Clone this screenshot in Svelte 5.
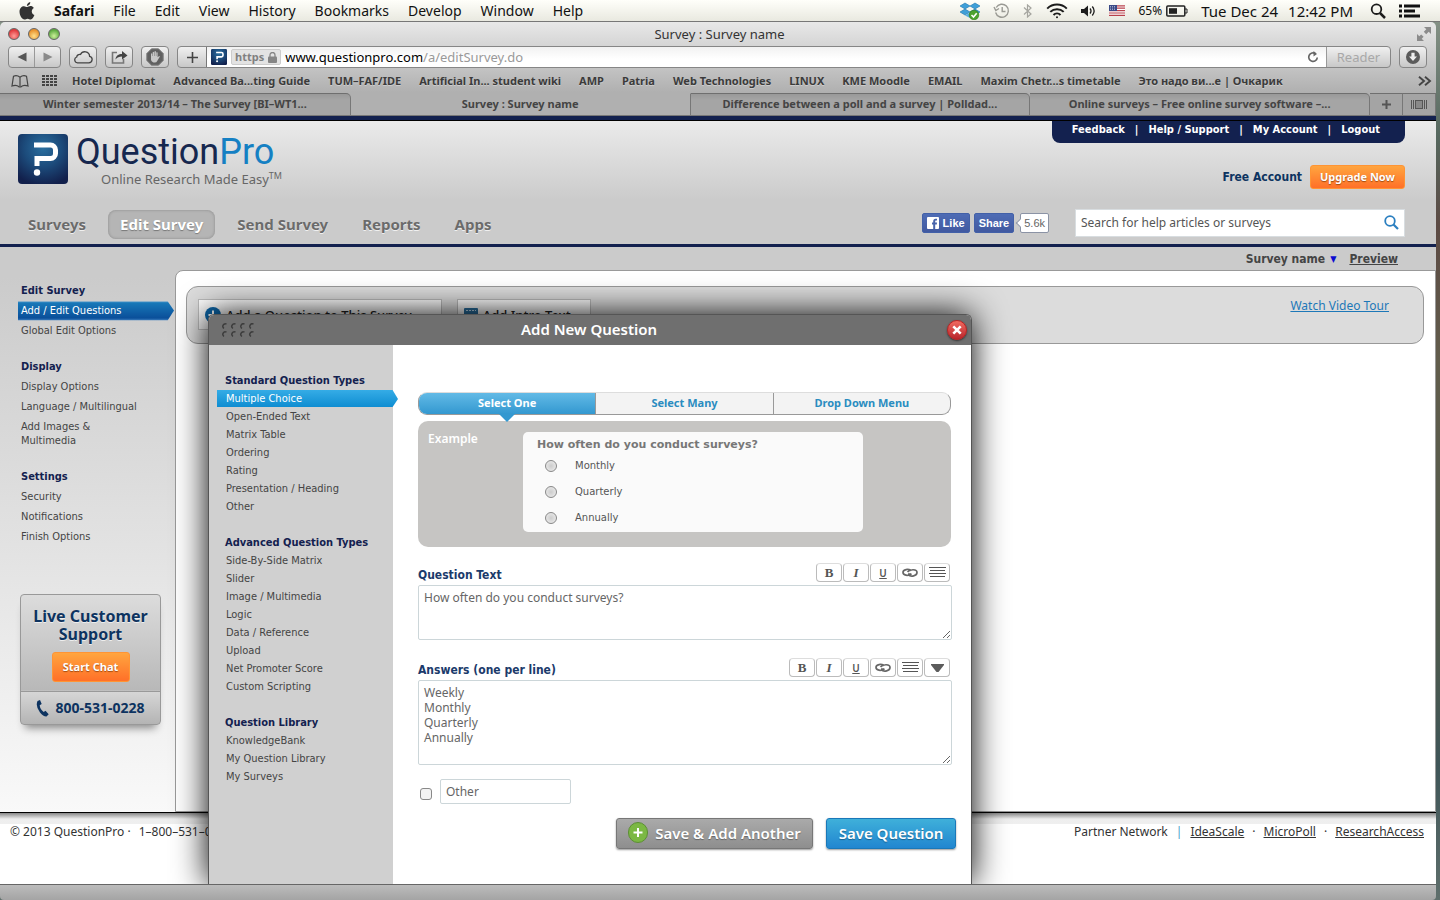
<script>
  const menus = ['File', 'Edit', 'View', 'History', 'Bookmarks', 'Develop', 'Window', 'Help'];
  const bookmarks = [
    'Hotel Diplomat', 'Advanced Ba...ting Guide', 'TUM–FAF/IDE', 'Artificial In... student wiki', 'AMP', 'Patria',
    'Web Technologies', 'LINUX', 'KME Moodle', 'EMAIL', 'Maxim Chetr...s timetable', 'Это надо ви...е | Очкарик'
  ];
  const tabs = [
    'Winter semester 2013/14 – The Survey [BI–WT1...',
    'Survey : Survey name',
    'Difference between a poll and a survey | Polldad...',
    'Online surveys – Free online survey software –...'
  ];
  const nav = ['Surveys', 'Edit Survey', 'Send Survey', 'Reports', 'Apps'];
  const account = ['Feedback', 'Help / Support', 'My Account', 'Logout'];
  const sideGroups = [
    { title: 'Edit Survey', items: ['Add / Edit Questions', 'Global Edit Options'] },
    { title: 'Display', items: ['Display Options', 'Language / Multilingual', 'Add Images & Multimedia'] },
    { title: 'Settings', items: ['Security', 'Notifications', 'Finish Options'] }
  ];
  const typeGroups = [
    { title: 'Standard Question Types', items: ['Multiple Choice', 'Open-Ended Text', 'Matrix Table', 'Ordering', 'Rating', 'Presentation / Heading', 'Other'] },
    { title: 'Advanced Question Types', items: ['Side-By-Side Matrix', 'Slider', 'Image / Multimedia', 'Logic', 'Data / Reference', 'Upload', 'Net Promoter Score', 'Custom Scripting'] },
    { title: 'Question Library', items: ['KnowledgeBank', 'My Question Library', 'My Surveys'] }
  ];
  const modes = ['Select One', 'Select Many', 'Drop Down Menu'];
  const samples = ['Monthly', 'Quarterly', 'Annually'];
  let mode = $state('Select One');
  let questionType = $state('Multiple Choice');
  let questionText = $state('How often do you conduct surveys?');
  let answers = $state('Weekly\nMonthly\nQuarterly\nAnnually');
  let other = $state('Other');
</script>

{#snippet mark(size)}
  <svg width={size} height={size} viewBox="0 0 50 50" aria-hidden="true">
    <defs>
      <radialGradient id="mark{size}" cx="50%" cy="28%" r="75%">
        <stop offset="0" stop-color="#2a6f9f" /><stop offset="0.5" stop-color="#1c4b7b" /><stop offset="1" stop-color="#12204c" />
      </radialGradient>
    </defs>
    <rect width="50" height="50" rx="4" fill="url(#mark{size})" />
    <path d="M16 11h16.500a5 5 0 0 1 5 5v3.500a5 5 0 0 1-5 5H19v7.500" fill="none" stroke="#fff" stroke-width="5" />
    <circle cx="19" cy="38.500" r="3.200" fill="#fff" />
  </svg>
{/snippet}

{#snippet tools(withMenu)}
  <div class="tools">
    <button type="button" aria-label="Bold"><b class="serif">B</b></button>
    <button type="button" aria-label="Italic"><i class="serif">I</i></button>
    <button type="button" aria-label="Underline"><u>U</u></button>
    <button type="button" aria-label="Link">
      <svg width="16" height="10" viewBox="0 0 16 10" fill="none" stroke="#666" stroke-width="1.700">
        <path d="M9 6H6M9 2.600C6.500.8 1 1 1 4.300c0 3.200 5 4 8.500 1.500M5.500 4C8 1 15 .8 15 4.500c0 3.600-6 4.500-9 2.400" />
      </svg>
    </button>
    <button type="button" aria-label="Lines">
      <svg width="17" height="11" viewBox="0 0 17 11" stroke="#555"><path d="M0 .5h17M1 3.500h15M0 6.500h17M1 9.500h15" /></svg>
    </button>
    {#if withMenu}
      <button type="button" aria-label="More">
        <svg width="13" height="8" viewBox="0 0 13 8" fill="#5c5c5c"><path d="M0 0h13v1L7.500 8h-2L0 1z" /></svg>
      </button>
    {/if}
  </div>
{/snippet}

<div class="desktop">
  <header class="menubar">
    <svg class="apple" width="16" height="18" viewBox="0 0 16 18" fill="#333">
      <path d="M11.300 0c.1 1.900-1.400 3.900-3.400 4C7.600 2.200 9.400.2 11.300 0zM8.200 5c.8 0 1.700-.9 3.200-.9 1.300 0 2.600.6 3.400 1.800-3 1.800-2.500 5.900.6 7.100C14.700 15 13.300 17.500 11.700 17.500c-1.200 0-1.700-.8-3.100-.8s-2 .8-3.100.8C3 17.500.5 13.200.5 9.800.5 6.200 2.700 4.200 5 4.200c1.300 0 2.300.8 3.200.8z" />
    </svg>
    <nav class="menus">
      <b>Safari</b>
      {#each menus as m}<span>{m}</span>{/each}
    </nav>
    <div class="status">
      <svg width="20" height="18" viewBox="0 0 20 18">
        <path d="M5 1l5 3-5 3-5-3zM15 1l5 3-5 3-5-3zM5 7l5 3-5 3-5-3zM15 7l5 3-5 3-5-3z" fill="#3f9fd8" stroke="#1d75ae" stroke-width=".6" />
        <path d="M10 10.500l4 2.500-4 3-5-2.500z" fill="#58b0e2" />
        <circle cx="14" cy="13" r="4.800" fill="#4da32f" stroke="#2c7a16" stroke-width=".6" />
        <path d="M11.500 13l2 2 3.200-3.800" fill="none" stroke="#fff" stroke-width="1.600" />
      </svg>
      <svg width="17" height="16" viewBox="0 0 17 16" fill="none" stroke="#9a9a94" stroke-width="1.400">
        <path d="M2.600 9.500A6.500 6.500 0 1 0 3.200 4.500M1 4l1.800 3.500L6 5.500M9.200 4v4.500h3.300" />
      </svg>
      <svg width="10" height="14" viewBox="0 0 10 14" fill="none" stroke="#a5a59f" stroke-width="1.200"><path d="M1 3.500l7 6.500-3.500 3V1L8 4l-7 6.500" /></svg>
      <svg width="22" height="16" viewBox="0 0 22 16" fill="none" stroke="#1c1c1c" stroke-width="2">
        <path d="M1.200 5.600a14 14 0 0 1 19.600 0M4.300 8.900a9.500 9.500 0 0 1 13.400 0M7.500 12a5 5 0 0 1 7 0" /><circle cx="11" cy="14.300" r="1" fill="#1c1c1c" stroke="none" />
      </svg>
      <svg width="15" height="12" viewBox="0 0 15 12" fill="#1c1c1c"><path d="M0 4h3l4-3.500v11L3 8H0z" /><path d="M9 3.500q2 2.500 0 5M11.300 1.500q3.700 4.500 0 9" fill="none" stroke="#1c1c1c" stroke-width="1.300" /></svg>
      <svg width="16" height="11" viewBox="0 0 16 11"><rect width="16" height="11" fill="#fff" /><path d="M0 .8h16M0 3.200h16M0 5.600h16M0 8h16M0 10.400h16" stroke="#b8414b" stroke-width="1.200" /><rect width="8" height="6" fill="#3a4a86" /><path d="M1 1.500h6M1 3h6M1 4.500h6" stroke="#c5cce4" stroke-width=".7" stroke-dasharray="1 1" /></svg>
      <span class="battery">65%
        <svg width="22" height="12" viewBox="0 0 22 12"><rect x=".8" y="1" width="18" height="10" rx="1" fill="none" stroke="#222" stroke-width="1.500" /><rect x="3" y="3.200" width="8" height="5.600" fill="#222" /><path d="M19 4h2v4h-2" fill="none" stroke="#222" /></svg>
      </span>
      <span class="clock"><span>Tue Dec 24</span><span>12:42 PM</span></span>
      <svg width="16" height="16" viewBox="0 0 16 16" fill="none" stroke="#1c1c1c" stroke-width="1.800"><circle cx="6.500" cy="6.200" r="4.800" /><path d="M10 10l5 5" stroke-width="2.500" /></svg>
      <svg width="22" height="14" viewBox="0 0 22 14" fill="#111"><path d="M0 .5h3v3H0zM5 .5h16v3H5zM0 5.500h3v3H0zM5 5.500h11v3H5zM0 10.500h3v3H0zM5 10.500h16v3H5z" /></svg>
    </div>
  </header>

  <div class="window">
    <div class="chrome">
      <div class="titlebar">
        <div class="lights"><i class="red"></i><i class="amber"></i><i class="green"></i></div>
        <span>Survey : Survey name</span>
        <svg class="expand" width="14" height="14" viewBox="0 0 14 14" fill="#8b8b8b"><path d="M7 0h7v7l-2.300-2.300-2.500 2.500-2.400-2.400 2.500-2.500zM0 7l2.300 2.300L4.200 7.400l2.400 2.400-1.900 1.900L7 14H0z" /></svg>
      </div>
      <div class="toolbar">
        <div class="pair">
          <button type="button" aria-label="Back"><svg width="10" height="10" viewBox="0 0 10 10" fill="#555"><path d="M9.500.5v9L.5 5z" /></svg></button>
          <button type="button" aria-label="Forward"><svg width="10" height="10" viewBox="0 0 10 10" fill="#8a8a8a"><path d="M.5.5v9l9-4.500z" /></svg></button>
        </div>
        <button class="tb" type="button" aria-label="iCloud"><svg width="20" height="14" viewBox="0 0 20 14" fill="none" stroke="#444" stroke-width="1.300"><path d="M4.500 12.800h11.300a3.300 3.300 0 0 0 .8-6.500A4.800 4.800 0 0 0 7.500 4.500 3 3 0 0 0 3.700 7a3 3 0 0 0 .8 5.800z" /></svg></button>
        <button class="tb" type="button" aria-label="Share"><svg width="17" height="14" viewBox="0 0 17 14"><path d="M6 2.500H1.500v10.500h11V9" fill="none" stroke="#777" stroke-width="1.600" /><path d="M4.500 9.500C5 5.500 7.500 4 11 4V1l5.500 4.500L11 9.500v-3c-3 0-4.500.7-6.500 3z" fill="#444" /></svg></button>
        <button class="tb" type="button" aria-label="Block"><svg width="18" height="18" viewBox="0 0 18 18"><path d="M5.500.8h7l4.700 4.700v7l-4.700 4.700h-7L.8 12.500v-7z" fill="#606060" stroke="#808080" /><path d="M5 9.500V5.800q.7-.9 1.300 0V8h.4V4.200q.7-.9 1.400 0V8h.4V3.400q.7-.9 1.400 0V8h.4V4.600q.7-.9 1.300 0v4.700l1.600-1.400q1 .1.400 1.200L11.200 13q-.7 1.500-2.400 1.500-3.100 0-3.800-2.800z" fill="#c8c8c8" /></svg></button>
        <div class="urlgroup">
          <button class="plus" type="button" aria-label="Add bookmark"><svg width="11" height="11" viewBox="0 0 11 11" stroke="#444" stroke-width="1.600"><path d="M5.500 0v11M0 5.500h11" /></svg></button>
          <div class="url">
            {@render mark(16)}
            <span class="secure">https <svg width="9" height="11" viewBox="0 0 9 11" fill="#858585"><rect y="4.500" width="9" height="6.500" rx="1" /><path d="M2 5V3a2.500 2.500 0 0 1 5 0v2" fill="none" stroke="#858585" stroke-width="1.300" /></svg></span>
            <span class="address">www.questionpro.com<em>/a/editSurvey.do</em></span>
            <svg class="reload" width="12" height="12" viewBox="0 0 12 12" fill="none" stroke="#666" stroke-width="1.700"><path d="M8.500 2.600A4.300 4.300 0 1 0 10.300 6.500" /><path d="M6.500 0L10 3 6.500 5.500z" fill="#666" stroke="none" /></svg>
          </div>
          <button class="reader" type="button">Reader</button>
        </div>
        <button class="tb" type="button" aria-label="Downloads"><svg width="14" height="14" viewBox="0 0 14 14"><circle cx="7" cy="7" r="7" fill="#5b5b5b" /><path d="M5.400 2.800h3.200v3.700H11L7 11 3 6.500h2.400z" fill="#eee" /></svg></button>
      </div>
      <div class="bookmarks">
        <svg width="18" height="13" viewBox="0 0 18 13" fill="none" stroke="#444" stroke-width="1.200"><path d="M9 2.200Q6-.2 2.500 1.200L1 11q4.500-1.500 7 .8h2q2.500-2.300 7-.8L15.500 1.200Q12-.2 9 2.200zM9 2.200V11" /></svg>
        <svg class="gridicon" width="16" height="12" viewBox="0 0 16 12" fill="#444"><path d="M0 0h3v2H0zM4 0h3v2H4zM8 0h3v2H8zM12 0h3v2h-3zM0 3h3v2H0zM4 3h3v2H4zM8 3h3v2H8zM12 3h3v2h-3zM0 6h3v2H0zM4 6h3v2H4zM8 6h3v2H8zM12 6h3v2h-3zM0 9h3v2H0zM4 9h3v2H4zM8 9h3v2H8zM12 9h3v2h-3z" /></svg>
        {#each bookmarks as b}<span>{b}</span>{/each}
        <svg class="more" width="14" height="10" viewBox="0 0 14 10" fill="none" stroke="#444" stroke-width="1.900"><path d="M1 .8L6 5 1 9.200M7 .8L12 5 7 9.200" /></svg>
      </div>
      <div class="tabs">
        {#each tabs as t, i}<div class="tab" class:active={i === 1}>{t}</div>{/each}
        <button class="tabbtn" type="button" aria-label="New tab"><svg width="9" height="9" viewBox="0 0 9 9" stroke="#555" stroke-width="2"><path d="M4.500 0v9M0 4.500h9" /></svg></button>
        <button class="tabbtn" type="button" aria-label="Show all tabs"><svg width="16" height="9" viewBox="0 0 16 9" fill="none" stroke="#555"><path d="M.5 0v9M15.500 0v9M2.500 0v9M13.500 0v9" /><rect x="4.500" y=".5" width="7" height="8" fill="#888" /></svg></button>
      </div>
    </div>

    <div class="page">
      <div class="sitehead">
        <div class="brandrow">
          <a class="brand" href="#home">
            {@render mark(50)}
            <span class="words"><span class="name">Question<em>Pro</em></span><span class="tag">Online Research Made Easy<small>TM</small></span></span>
          </a>
          <div class="accountcol">
            <nav class="account">
              {#each account as a, i}{#if i}<span>|</span>{/if}<a href="#account">{a}</a>{/each}
            </nav>
            <div class="plan"><b>Free Account</b><button class="orange" type="button">Upgrade Now</button></div>
          </div>
        </div>
        <div class="navrow">
          <nav class="mainnav">
            {#each nav as n}<a href="#nav" class:current={n === 'Edit Survey'}>{n}</a>{/each}
          </nav>
          <div class="social">
            <button type="button"><svg width="12" height="12" viewBox="0 0 12 12"><rect width="12" height="12" rx="1" fill="#fff" /><path d="M8.200 12V7.400h1.600l.2-1.900H8.200V4.400c0-.6.200-.9.900-.9H10V1.800H8.600C7 1.800 6.200 2.800 6.200 4.200v1.300H5v1.900h1.200V12z" fill="#4864ab" /></svg>Like</button>
            <button type="button">Share</button>
            <span class="count">5.6k</span>
          </div>
          <div class="search">
            <input type="text" aria-label="Search" placeholder="Search for help articles or surveys" />
            <svg width="15" height="15" viewBox="0 0 15 15" fill="none" stroke="#2b7fc0" stroke-width="1.800"><circle cx="6" cy="6" r="4.800" /><path d="M9.500 9.500l4.500 4.500" stroke-width="2.200" /></svg>
          </div>
        </div>
      </div>

      <div class="lower">
        <div class="crumb"><b>Survey name</b><span class="tri">▼</span><a href="#preview">Preview</a></div>
        <div class="body">
          <aside>
            {#each sideGroups as g}
              <section>
                <h3>{g.title}</h3>
                <ul>
                  {#each g.items as it}
                    <li class:on={it === 'Add / Edit Questions'}><a href="#side">{it}</a></li>
                  {/each}
                </ul>
              </section>
            {/each}
            <div class="support">
              <div class="chat"><strong>Live Customer Support</strong><button class="orange" type="button">Start Chat</button></div>
              <div class="phone"><svg width="13" height="17" viewBox="0 0 13 17" fill="#0d3360"><path d="M1.500 1L4 0l1.700 4-2 1.300Q4 9.500 7.700 12L9.500 10.800l3.200 3.400L10.500 16.500Q7.500 16.800 4 12.500-.8 6 1.500 1z" /></svg>800-531-0228</div>
            </div>
          </aside>
          <main>
            <div class="actions">
              <button type="button"><svg width="16" height="16" viewBox="0 0 16 16"><circle cx="8" cy="8" r="8" fill="#0d66a8" /><path d="M8 3.500v9M3.500 8h9" stroke="#fff" stroke-width="2" /></svg>Add a Question to This Survey...</button>
              <button type="button"><svg width="14" height="14" viewBox="0 0 14 14"><rect width="14" height="14" rx="1" fill="#2a6f9f" /><path d="M2 2.500h10" stroke="#bcd8ea" stroke-dasharray="2 1" /><path d="M2 6h10v6H2z" fill="#cfe2ef" /></svg>Add Intro Text</button>
              <a href="#tour">Watch Video Tour</a>
            </div>
          </main>
        </div>
      </div>

      <footer>
        <span class="legal"><span>© 2013 QuestionPro ·</span><span>1–800–531–0228</span></span>
        <span class="partners"><span>Partner Network</span><span class="bar">|</span><a href="#is">IdeaScale</a><span>·</span><a href="#mp">MicroPoll</a><span>·</span><a href="#ra">ResearchAccess</a></span>
      </footer>

      <div class="dialog" role="dialog" aria-label="Add New Question">
        <div class="dtitle">
          <svg width="36" height="14" viewBox="0 0 36 14" fill="none" stroke="#3c3c3c" stroke-width="1.500">
            {#each [0, 1, 2, 3] as c}{#each [0, 1] as r}<path d="M{c * 9 + 5.500} {r * 8 + 1.200}a2.300 2.300 0 1 0 -2.500 4.200" />{/each}{/each}
          </svg>
          <h2>Add New Question</h2>
          <button class="close" type="button" aria-label="Close"><svg width="10" height="10" viewBox="0 0 10 10" stroke="#fff" stroke-width="2.600"><path d="M1.300 1.300l7.400 7.400M8.700 1.300L1.300 8.700" /></svg></button>
        </div>
        <div class="dbody">
          <div class="types">
            {#each typeGroups as g}
              <section>
                <h3>{g.title}</h3>
                <ul>
                  {#each g.items as it}
                    <li class:on={it === questionType}><a href="#type" onclick={() => (questionType = it)}>{it}</a></li>
                  {/each}
                </ul>
              </section>
            {/each}
          </div>
          <form class="editor" onsubmit={(e) => e.preventDefault()}>
            <div class="modes">
              {#each modes as m}<button type="button" class:on={m === mode} onclick={() => (mode = m)}>{m}</button>{/each}
            </div>
            <div class="example">
              <b>Example</b>
              <fieldset>
                <legend>How often do you conduct surveys?</legend>
                {#each samples as s}<label><input type="radio" name="sample" />{s}</label>{/each}
              </fieldset>
            </div>
            <div class="fieldhead"><label for="qtext">Question Text</label>{@render tools(false)}</div>
            <textarea id="qtext" class="short" bind:value={questionText}></textarea>
            <div class="fieldhead"><label for="answers">Answers (one per line)</label>{@render tools(true)}</div>
            <textarea id="answers" class="tall" bind:value={answers}></textarea>
            <div class="otherrow">
              <input type="checkbox" aria-label="Include other" />
              <input type="text" aria-label="Other label" bind:value={other} />
            </div>
            <div class="submit">
              <button class="grey" type="button"><svg width="20" height="22" viewBox="0 0 20 22"><rect x=".5" y=".5" width="19" height="20" rx="9.500" fill="#7bb843" stroke="#5d8f35" /><path d="M10 6v9M5.500 10.500h9" stroke="#fff" stroke-width="2" /></svg>Save &amp; Add Another</button>
              <button class="blue" type="submit">Save Question</button>
            </div>
          </form>
        </div>
      </div>
    </div>
    <div class="statusbar"></div>
  </div>
</div>

<style>
  :global(body) { margin: 0; }
  * { box-sizing: border-box; }
  .desktop {
    --ui: "Noto Sans", "Open Sans", sans-serif;
    --tahoma: "DejaVu Sans Condensed", "DejaVu Sans", sans-serif;
    height: 100vh; display: flex; flex-direction: column; overflow: hidden;
    font: 12px/16px var(--ui); color: #444;
    background: linear-gradient(#8c988c, #56685f 15%, #5c4a44 25%, #625d4c 40%, #4f5a4c 70%, #3f5558 85%, #5f6f6c);
  }
  button, input, textarea { font: inherit; color: inherit; margin: 0; padding: 0; }
  button { cursor: pointer; border: 0; background: none; display: flex; align-items: center; justify-content: center; }
  ul { list-style: none; margin: 0; padding: 0; }
  h2, h3 { margin: 0; }
  svg { flex: none; display: block; }
  a { color: inherit; text-decoration: none; }

  .menubar {
    display: flex; align-items: center; height: 22px; padding: 0 19px 0 19px; flex: none;
    background: linear-gradient(#fffffa, #e9e9e0); border-bottom: 1px solid #777; color: #111; font-size: 14px;
  }
  .apple { margin-right: 19px; }
  .menus { display: flex; gap: 19px; }
  .status { margin-left: auto; display: flex; align-items: center; gap: 13px; }
  .battery { display: flex; align-items: center; gap: 4px; font-size: 12px; }
  .clock { display: flex; gap: 10px; margin-right: 4px; font-size: 15px; }

  .window { flex: 1; min-height: 0; margin-right: 4px; display: flex; flex-direction: column; }
  .chrome { flex: none; background: linear-gradient(#e8e8e8, #b0b0b0 70px); border-radius: 5px 5px 0 0; color: #333; }
  .titlebar { display: flex; align-items: center; justify-content: space-between; height: 23px; padding: 0 5px 0 8px; font-size: 13px; }
  .lights { display: flex; gap: 8px; width: 52px; }
  .lights i { width: 12px; height: 12px; border-radius: 6px; border: 1px solid #666; }
  .expand { margin-left: 38px; }
  .red { background: radial-gradient(circle at 50% 70%, #ff9d98, #e0393c 70%); }
  .amber { background: radial-gradient(circle at 50% 70%, #ffe08b, #e8912c 70%); }
  .green { background: radial-gradient(circle at 50% 70%, #cdf09b, #5caa3f 70%); }
  .toolbar { display: flex; align-items: center; height: 24px; padding: 0 9px 0 8px; gap: 8px; }
  .pair, .tb, .urlgroup { height: 22px; border: 1px solid #868686; border-radius: 4px; background: linear-gradient(#f0f0f0, #c8c8c8); }
  .pair { display: flex; width: 53px; }
  .pair button { flex: 1; }
  .pair button + button { border-left: 1px solid #999; }
  .tb { width: 28px; }
  .urlgroup { flex: 1; display: flex; overflow: hidden; }
  .plus { width: 29px; border-right: 1px solid #777; }
  .url { flex: 1; display: flex; align-items: center; gap: 4px; padding: 0 7px 0 4px; background: linear-gradient(#f2f2f2, #fff 60%); }
  .secure { display: flex; align-items: center; gap: 4px; height: 16px; padding: 0 3px; background: #e3e3e3; border: 1px solid #ccc; border-radius: 2px; color: #808080; font-weight: bold; font-size: 11px; }
  .address { color: #000; font-size: 13px; }
  em { font-style: normal; color: #999; }
  .reload { margin-left: auto; }
  .reader { width: 64px; border-left: 1px solid #999; color: #a8a8a8; font-size: 13px; }
  .bookmarks { display: flex; align-items: center; gap: 18px; height: 24px; padding: 0 4px 0 11px; font: bold 11px/16px var(--ui); color: #3b3b3b; text-shadow: 0 1px #ccc; white-space: nowrap; }
  .gridicon { margin: 0 -4px 0 -5px; }
  .more { margin-left: auto; }
  .tabs { display: flex; height: 23px; background: #b0b0b0; border-bottom: 1px solid #777; font: bold 11px/20px var(--ui); color: #444; }
  .tab { flex: 1; min-width: 0; text-align: center; white-space: nowrap; overflow: hidden; background: linear-gradient(#999, #a5a5a5 6px); border-top: 1px solid #6f6f6f; border-right: 1px solid #777; border-radius: 0 5px 0 0; }
  .tab:first-child { flex-basis: 12px; }
  .tab.active { background: #b0b0b0; border-top-color: #b0b0b0; border-radius: 0; }
  .tabbtn { width: 33px; background: #a4a4a4; border-top: 1px solid #6f6f6f; border-right: 1px solid #777; }

  .page { position: relative; flex: 1; min-height: 0; overflow: hidden; background: #fff; display: flex; flex-direction: column; }
  .sitehead { flex: none; background: linear-gradient(#ebebeb, #cbcbcb 80px); border-top: 4px solid #13214f; border-bottom: 3px solid #13214f; }
  .brandrow { display: flex; justify-content: space-between; height: 85px; padding: 0 31px 0 18px; border-top: 1px solid #000; }
  .brand { display: flex; gap: 8px; padding-top: 13px; }
  .words { display: flex; flex-direction: column; }
  .name { font: 36px/36px "Roboto", sans-serif; color: #16284f; }
  .name em { color: #1580c3; }
  .tag { display: flex; padding-left: 25px; font-size: 13px; line-height: 18px; color: #666; }
  .tag small { font-size: 9px; line-height: 12px; }
  .accountcol { display: flex; flex-direction: column; align-items: flex-end; }
  .account { display: flex; gap: 10px; height: 22px; padding: 0 25px 4px 20px; align-items: center; background: #13214f; border-radius: 0 0 8px 8px; color: #fff; font: bold 11px/16px var(--tahoma); }
  .plan { display: flex; align-items: center; gap: 8px; padding-top: 22px; color: #0d3360; font: bold 12px/16px var(--tahoma); }
  .orange { border: 1px solid #ff9434; border-radius: 3px; background: linear-gradient(#ffa53f, #ff7028); color: #fff; font: bold 11px/16px var(--ui); text-shadow: 0 1px 1px #a04a10; }
  .plan .orange { width: 95px; height: 24px; }
  .navrow { display: flex; align-items: center; height: 39px; padding: 0 31px 0 16px; }
  .mainnav { display: flex; gap: 10px; margin-right: auto; }
  .mainnav a { padding: 0 12px; border-radius: 8px; font: bold 15px/29px var(--ui); color: #6b6b6b; text-shadow: 0 1px #f0f0f0; }
  .mainnav a.current { background: #b5b5b5; box-shadow: inset 0 0 3px #888; color: #fff; text-shadow: 0 1px 1px #777; }
  .social { display: flex; gap: 4px; font: bold 12px/18px "Liberation Sans", sans-serif; margin: 0 26px 3px 0; }
  .social button { gap: 4px; height: 20px; padding: 0 4px; border: 1px solid #4260a8; border-radius: 2px; background: linear-gradient(#4e6cb5, #4159a0); color: #fff; font-size: 11px; }
  .count { position: relative; height: 20px; margin-left: 2px; padding: 0 3px; border: 1px solid #8b93a5; border-radius: 2px; background: #fff; color: #666; font-weight: normal; font-size: 11px; }
  .count::before { content: ""; position: absolute; left: -4px; top: 6px; width: 5px; height: 5px; border: 1px solid #8b93a5; border-width: 0 0 1px 1px; background: #fff; transform: rotate(45deg); }
  .search { display: flex; align-items: center; width: 330px; height: 28px; margin-bottom: 4px; padding: 0 5px; background: #fff; border: 1px solid #d8dde0; }
  .search input { flex: 1; border: 0; outline: 0; background: none; font-size: 12px; }
  .search input::placeholder { color: #555; opacity: 1; }

  .lower { flex: none; display: flex; flex-direction: column; background: linear-gradient(#cbcbcb, #cbcbcb 30px, #f9f9f9); border-bottom: 1px solid #000; }
  .crumb { display: flex; justify-content: flex-end; align-items: center; gap: 5px; height: 23px; padding-right: 38px; font: bold 12px/16px var(--tahoma); }
  .tri { color: #0b0bd0; font-size: 9px; }
  .crumb a { text-decoration: underline; margin-left: 8px; }
  .body { display: flex; }
  aside { width: 175px; min-height: 542px; padding: 11px 0 0 18px; font: 11px/14px var(--tahoma); flex: none; }
  section { margin-bottom: 16px; }
  h3 { font: bold 11px/14px var(--tahoma); color: #13214f; padding: 3px; }
  aside li { padding: 3px 28px 3px 3px; }
  aside li.on { padding-right: 0; width: 156px; color: #fff; background: linear-gradient(#5aa0d0, #1878b8 2px, #0a4f9a 17px, #4a8ac8); clip-path: polygon(0 3%, 96% 3%, 100% 48%, 96% 96%, 0 96%); }
  .support { width: 141px; margin: 47px 0 0 2px; border: 1px solid #999; border-radius: 4px; background: linear-gradient(#dcdcdc, #b8b8b8 95px, #d6d6d6 97px, #b4b4b4); color: #0d3360; box-shadow: 0 8px 8px -5px #888; }
  .chat { display: flex; flex-direction: column; align-items: center; gap: 9px; height: 97px; padding: 12px 10px 0; border-bottom: 1px solid #999; text-align: center; text-shadow: 0 1px #eee; }
  .chat strong { font: bold 16px/18px var(--ui); }
  .chat .orange { width: 78px; height: 30px; flex: none; }
  .phone { display: flex; align-items: center; justify-content: center; gap: 6px; height: 32px; font: bold 14px/18px var(--ui); }
  main { flex: 1; padding: 15px 11px 15px 10px; background: #fff; border: 1px solid #999; border-radius: 8px 0 0 0; }
  .actions { display: flex; gap: 15px; align-items: flex-start; height: 58px; padding: 12px 34px 0 11px; border: 1px solid #999; border-radius: 12px; background: #dcdcdc; }
  .actions button { gap: 5px; height: 31px; padding: 0 19px 0 6px; background: linear-gradient(#fff, #eee); border: 1px solid #bbb; color: #222; font-size: 13px; font-weight: 500; white-space: nowrap; }
  .actions a { margin-left: auto; color: #1d78b8; text-decoration: underline; font-size: 12px; line-height: 14px; }

  footer { flex: 1; display: flex; justify-content: space-between; padding: 11px 12px 0 10px; color: #333; background: linear-gradient(#888, #eee 6px, #efefef 11px, #fff 11px); }
  .legal, .partners { display: flex; gap: 8px; }
  .bar { color: #4aa0c8; }
  .partners a { text-decoration: underline; }
  .statusbar { flex: none; height: 16px; background: linear-gradient(#bcbcbc, #a4a4a4); border-top: 1px solid #666; border-radius: 0 0 4px 4px; }

  .dialog { position: absolute; left: 208px; top: 198px; bottom: 0; width: 764px; display: flex; flex-direction: column; border: 1px solid #555; border-bottom: 0; border-radius: 6px 6px 0 0; background: #fff; box-shadow: 0 0 34px 0 #000; }
  .dtitle { display: flex; align-items: center; height: 30px; padding: 0 4px 0 12px; border-radius: 5px 5px 0 0; background: #6f6f6f; color: #fff; flex: none; }
  .dtitle h2 { flex: 1; padding: 0 26px 2px 0; text-align: center; font: 600 15px/20px var(--ui); }
  .close { width: 20px; height: 20px; border-radius: 10px; border: 1px solid #b22; background: linear-gradient(#f06a60, #b8262c); box-shadow: 0 1px 2px #333; }
  .dbody { display: flex; flex: 1; }
  .types { width: 184px; padding: 27px 0 0 8px; background: #d0d0d0; font: 11px/18px var(--tahoma); flex: none; }
  .types h3 { padding: 0 8px; line-height: 18px; }
  .types section { margin-bottom: 18px; }
  .types li { height: 18px; padding-left: 9px; }
  .types li.on { width: 181px; color: #fff; background: linear-gradient(#35ace6, #0c8bd0); clip-path: polygon(0 0, 97% 0, 100% 50%, 97% 94%, 0 94%); }
  .editor { flex: 1; min-width: 0; padding: 47px 19px 0 25px; display: flex; flex-direction: column; }
  .modes { display: flex; flex: none; height: 23px; margin-right: 1px; border: 1px solid #999; border-top-color: #ddd; border-radius: 9px; background: #f3f3f3; }
  .modes button { position: relative; flex: 1; padding-bottom: 1px; font: bold 11px/16px var(--ui); color: #2a8cc0; }
  .modes button + button { border-left: 1px solid #999; }
  .modes .on { color: #fff; background: linear-gradient(#62bae6, #3398d0); border-radius: 8px 0 0 8px; }
  .modes .on::after { content: ""; position: absolute; left: 50%; bottom: -8px; margin-left: -9px; border: 9px solid transparent; border-bottom: 0; border-top-color: #3398d0; }
  .example { flex: none; height: 126px; margin: 6px 1px 0 0; padding: 11px 88px 0 10px; display: flex; justify-content: space-between; border-radius: 10px; background: #c6c5c3; }
  .example b { color: #fff; font: 600 12px/14px var(--ui); }
  fieldset { width: 340px; height: 100px; margin: 0; padding: 0 0 0 22px; border: 0; border-radius: 5px; background: #fafafa; font: 10px/26px "DejaVu Sans", sans-serif; color: #555; }
  legend { float: left; width: 100%; padding: 5px 0 0; margin-left: -8px; font: bold 11px/16px "DejaVu Sans", sans-serif; color: #777; }
  fieldset label { clear: both; display: flex; align-items: center; gap: 18px; }
  input[type='radio'] { appearance: none; width: 12px; height: 12px; margin: 0; border: 1px solid #888; border-radius: 6px; background: radial-gradient(#ccc, #f0f0f0); }
  .fieldhead { flex: none; display: flex; justify-content: space-between; align-items: flex-start; margin-top: 16px; }
  .fieldhead label { font: bold 12px/14px var(--tahoma); color: #1b3a6b; padding-top: 5px; }
  .tools { display: flex; gap: 1px; padding-right: 2px; }
  .tools button { width: 26px; height: 19px; border: 1px solid #bbb; border-top-color: #ddd; border-radius: 4px; color: #555; font-size: 10px; font-weight: 600; background: #fff; }
  .serif { font: bold 13px/16px "Liberation Serif", serif; }
  i.serif { font-style: italic; }
  textarea { flex: none; width: 100%; margin-top: 3px; padding: 4px 5px; border: 1px solid #ccd6d9; border-radius: 2px; font: 12px/15px var(--ui); color: #666; resize: vertical; outline: 0; }
  .short { height: 55px; }
  .tall { height: 85px; }
  .fieldhead + textarea + .fieldhead { margin-top: 18px; }
  .otherrow { flex: none; display: flex; align-items: flex-end; gap: 8px; margin-top: 14px; padding-left: 2px; }
  .otherrow [type='checkbox'] { appearance: none; width: 12px; height: 12px; margin-bottom: 4px; border: 1px solid #888; border-radius: 3px; background: #f2f2f2; }
  .otherrow [type='text'] { width: 131px; height: 25px; padding: 0 5px; border: 1px solid #ccd6d9; border-radius: 2px; color: #666; }
  .submit { flex: none; display: flex; justify-content: flex-end; gap: 13px; margin: 14px -4px 0 0; }
  .submit button { height: 31px; padding-bottom: 2px; border-radius: 3px; color: #fff; font: 600 15px/20px var(--ui); text-shadow: 0 1px 1px #0005; box-shadow: 0 1px 2px #999; white-space: nowrap; }
  .grey { gap: 7px; width: 197px; border: 1px solid #777; background: linear-gradient(#aaa, #8e8e8e); }
  .blue { width: 130px; border: 1px solid #1a78b8; background: linear-gradient(#3fb0da, #2186d0); }
</style>
